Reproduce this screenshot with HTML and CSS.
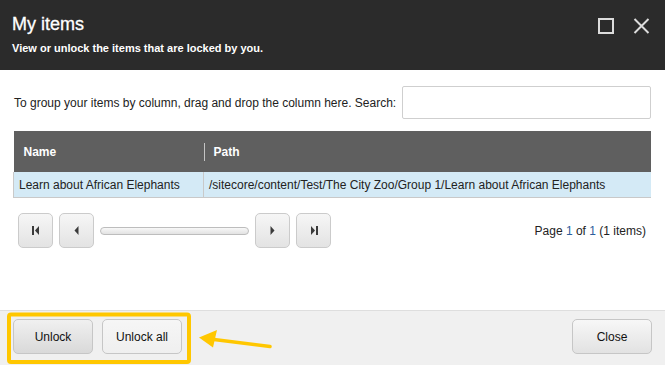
FILE: index.html
```html
<!DOCTYPE html>
<html lang="en">
<head>
  <meta charset="UTF-8">
  <meta name="viewport" content="width=device-width, initial-scale=1.0">
  <title>My items</title>
  <link rel="stylesheet" href="styles.css">
</head>
<body>

  <div class="dialog">
    <!-- Шапка -->
    <div class="header">
      <div class="titles">
        <div class="title">My items</div>
        <div class="subtitle">View or unlock the items that are locked by you.</div>
      </div>
      <div class="controls">
        <svg class="ctl" width="16" height="16" viewBox="0 0 16 16">
          <rect x="1" y="1" width="14" height="14" fill="none" stroke="#dcdcdc" stroke-width="2"/>
        </svg>
        <svg class="ctl" width="17" height="16" viewBox="0 0 17 16">
          <path d="M1.5 1 L15.5 15 M15.5 1 L1.5 15" stroke="#dcdcdc" stroke-width="2"/>
        </svg>
      </div>
    </div>

    <div class="content">
      <div class="toolbar">
        <span class="hint">To group your items by column, drag and drop the column here. Search:</span>
        <input type="text" class="search">
      </div>

      <table class="grid">
        <thead>
          <tr>
            <th class="col-name">Name</th>
            <th class="col-path"><span class="sep"></span>Path</th>
          </tr>
        </thead>
        <tbody>
          <tr>
            <td class="col-name">Learn about African Elephants</td>
            <td class="col-path">/sitecore/content/Test/The City Zoo/Group 1/Learn about African Elephants</td>
          </tr>
        </tbody>
      </table>

      <div class="pager">
        <div class="pager-nav">
          <button class="pbtn">
            <svg width="8" height="9" viewBox="0 0 8 9"><rect x="0" y="0" width="2" height="9" fill="#3a3a3a"/><path d="M7 0 L3 4.5 L7 9 Z" fill="#3a3a3a"/></svg>
          </button>
          <button class="pbtn">
            <svg width="5" height="9" viewBox="0 0 5 9"><path d="M4.5 0 L0.5 4.5 L4.5 9 Z" fill="#3a3a3a"/></svg>
          </button>
          <div class="slider"></div>
          <button class="pbtn">
            <svg width="5" height="9" viewBox="0 0 5 9"><path d="M0.5 0 L4.5 4.5 L0.5 9 Z" fill="#3a3a3a"/></svg>
          </button>
          <button class="pbtn">
            <svg width="8" height="9" viewBox="0 0 8 9"><path d="M1 0 L5 4.5 L1 9 Z" fill="#3a3a3a"/><rect x="6" y="0" width="2" height="9" fill="#3a3a3a"/></svg>
          </button>
        </div>
        <div class="page-info">Page <span class="num">1</span> of <span class="num">1</span> (1 items)</div>
      </div>
    </div>

    <!-- Кнопки внизу -->
    <div class="footer">
      <div class="footer-left">
        <button class="btn btn-pressed">Unlock</button>
        <button class="btn btn-flat">Unlock all</button>
      </div>
      <button class="btn">Close</button>
    </div>

    <!-- Жовта позначка поверх кнопок -->
    <svg class="mark" width="665" height="365" viewBox="0 0 665 365">
      <rect x="9" y="314.5" width="180" height="47.5" rx="2" fill="none" stroke="#ffc700" stroke-width="4"/>
      <path d="M270 346.5 L210 339" stroke="#ffc700" stroke-width="3.5" stroke-linecap="round"/>
      <path d="M199 337.5 L217 330 L213 347.5 Z" fill="#ffc700"/>
    </svg>
  </div>

</body>
</html>
```

FILE: styles.css
```css
body {
  margin: 0;
  font-family: "Liberation Sans", Arial, sans-serif;
  background: #ffffff;
  color: #222;
}
.dialog {
  position: relative;
  width: 665px;
  height: 365px;
  display: flex;
  flex-direction: column;
  overflow: hidden;
}
.header {
  height: 70px;
  box-sizing: border-box;
  background: #2b2b2b;
  color: #ffffff;
  padding: 13px 15px 0 12px;
  display: flex;
  justify-content: space-between;
  align-items: flex-start;
}
.title {
  font-size: 18px;
  line-height: 22px;
  -webkit-text-stroke: 0.3px #ffffff; /* трохи жирніше, як у макеті */
}
.subtitle {
  font-size: 11px;
  font-weight: bold;
  line-height: 14px;
  margin-top: 6px;
}
.controls {
  display: flex;
  gap: 19px;
  padding-top: 5px;
}
.ctl {
  display: block;
}
.content {
  flex: 1;
  padding: 16px 14px 0 13px;
}
.toolbar {
  display: flex;
  justify-content: space-between;
  align-items: center;
}
.hint {
  font-size: 12px;
  color: #222;
  padding-left: 1px;
}
.search {
  width: 249px;
  height: 33px;
  box-sizing: border-box;
  border: 1px solid #cfcfcf;
  border-radius: 2px;
  margin: 0;
  outline: none;
}
.grid {
  width: 100%;
  margin-top: 12px;
  border-collapse: collapse;
  font-size: 12px;
}
.grid th {
  background: #5f5f5f;
  color: #ffffff;
  font-weight: bold;
  text-align: left;
  height: 41px;
  padding: 0 10px;
  position: relative;
}
.grid th .sep {
  position: absolute;
  left: 0;
  top: 12px;
  width: 1px;
  height: 18px;
  background: #c4c4c4;
}
.grid .col-name {
  width: 170px;
}
.grid td {
  background: #d4eaf6;
  height: 25px;
  padding: 0 5px;
  border-bottom: 1px solid #c9c9c9;
  color: #222;
}
.grid td.col-name {
  border-left: 1px solid #c9c9c9;
  border-right: 1px solid #c9c9c9;
}
.pager {
  margin-top: 15px;
  padding: 0 5px;
  display: flex;
  justify-content: space-between;
  align-items: center;
}
.pager-nav {
  display: flex;
  align-items: center;
  gap: 6px;
}
.pbtn {
  width: 35px;
  height: 35px;
  margin: 0;
  padding: 0;
  border: 1px solid #cbcbcb;
  border-radius: 5px;
  background: linear-gradient(#f6f6f6, #e3e3e3);
  display: flex;
  align-items: center;
  justify-content: center;
}
.slider {
  width: 149px;
  height: 8px;
  box-sizing: border-box;
  border: 1px solid #bdbdbd;
  border-radius: 4px;
  background: linear-gradient(#f8f8f8, #e2e2e2);
}
.page-info {
  font-size: 12px;
  color: #222;
}
.page-info .num {
  color: #2d5d9c;
}
.footer {
  height: 55px;
  box-sizing: border-box;
  background: #f0f0f0;
  border-top: 1px solid #dedede;
  padding: 8px 13px 0 13px;
  display: flex;
  justify-content: space-between;
  align-items: flex-start;
}
.footer-left {
  display: flex;
  gap: 9px;
}
.btn {
  width: 80px;
  height: 35px;
  margin: 0;
  border: 1px solid #c6c6c6;
  border-radius: 5px;
  background: linear-gradient(#f7f7f7, #e2e2e2);
  font-family: "Liberation Sans", Arial, sans-serif;
  font-size: 12px;
  color: #111;
}
.btn-pressed {
  background: linear-gradient(#f0f0f0, #d9d9d9);
}
.btn-flat {
  background: linear-gradient(#f6f6f6, #efefef);
}
.mark {
  position: absolute;
  left: 0;
  top: 0;
  pointer-events: none;
}
```
